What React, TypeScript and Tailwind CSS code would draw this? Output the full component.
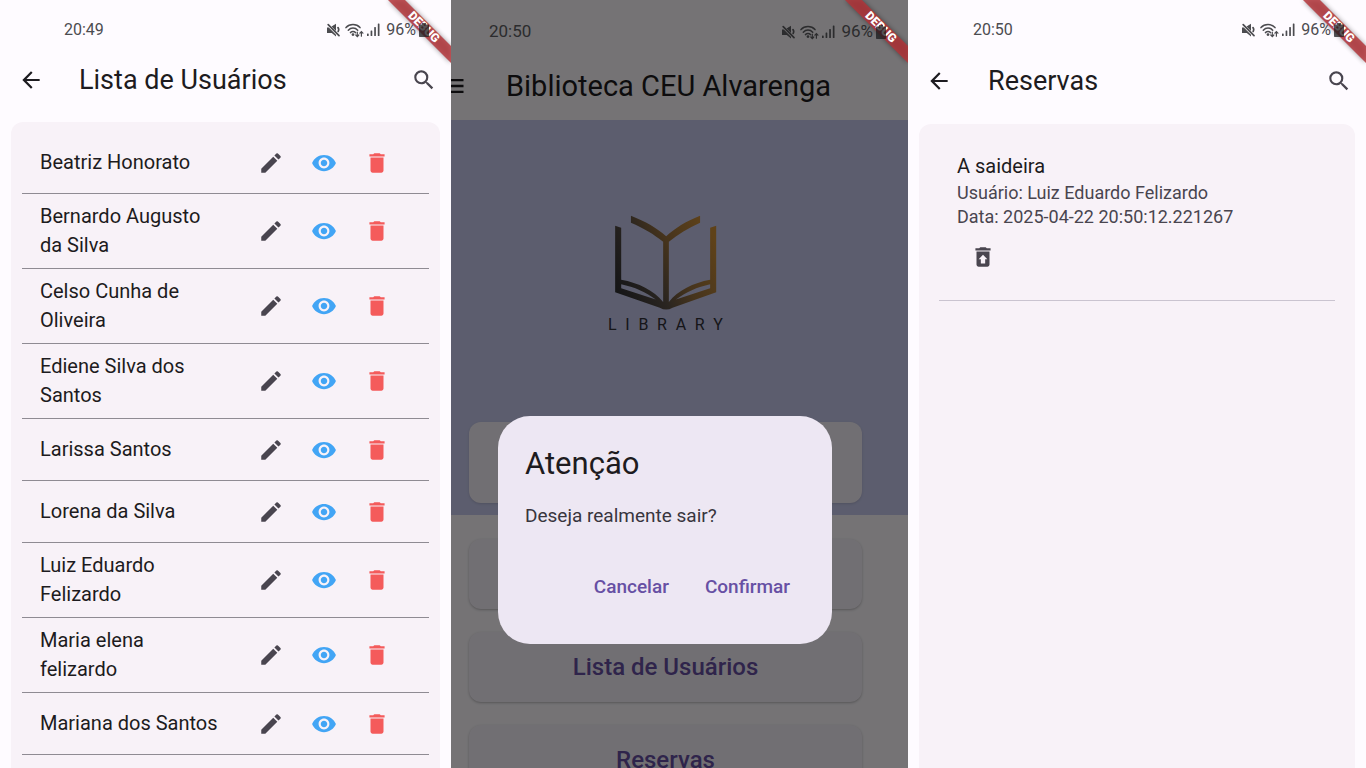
import React from "react";
import {
  MdArrowBack,
  MdDelete,
  MdEdit,
  MdMenu,
  MdRestoreFromTrash,
  MdSearch,
  MdVisibility,
} from "react-icons/md";

const users = [
  "Beatriz Honorato",
  "Bernardo Augusto\nda Silva",
  "Celso Cunha de\nOliveira",
  "Ediene Silva dos\nSantos",
  "Larissa Santos",
  "Lorena da Silva",
  "Luiz Eduardo\nFelizardo",
  "Maria elena\nfelizardo",
  "Mariana dos Santos",
];

function MuteIcon() {
  return (
    <svg width="13" height="14" viewBox="0 0 13 14" fill="currentColor">
      <path d="M0 4.600H1.800L9 11.800V13.400L4.800 10H0zM9 .8V8L4.600 3.600z" />
      <path
        d="M1.200 1.600L12 12.600M11 4.600c.8 1 .9 2.400.2 3.800"
        fill="none"
        stroke="currentColor"
        strokeWidth="1.700"
        strokeLinecap="round"
      />
    </svg>
  );
}

function WifiIcon() {
  return (
    <svg
      width="19"
      height="15"
      viewBox="0 0 19 15"
      fill="none"
      stroke="currentColor"
      strokeWidth="1.5"
      strokeLinecap="round"
    >
      <path d="M1 4.6C4.6 .6 11.4 .6 15 4.6M3.3 7.2c2.6-2.9 6.8-2.9 9.4 0M5.5 9.6c1.5-1.6 3.5-1.6 5 0" />
      <circle cx="8" cy="11.6" r=".7" fill="currentColor" />
      <path
        d="M12.3 9v4.4M10.8 12l1.5 1.6 1.5-1.6M16.4 13.2V8.8M14.9 10.2l1.5-1.6 1.5 1.6"
        strokeWidth="1.2"
      />
    </svg>
  );
}

function SignalIcon() {
  return (
    <svg width="13" height="14" viewBox="0 0 13 14" fill="currentColor">
      <rect x="0" y="10.5" width="1.7" height="2.5" rx=".6" />
      <rect x="3.6" y="7.5" width="1.7" height="5.5" rx=".6" />
      <rect x="7.2" y="4" width="1.7" height="9" rx=".6" />
      <rect x="10.8" y="0.5" width="1.7" height="12.5" rx=".6" />
    </svg>
  );
}

// The system bar stays above the app's banner
function BatteryIcon() {
  return (
    <svg
      className="relative z-30 opacity-75"
      width="10"
      height="14"
      viewBox="0 0 10 14"
      fill="#1c1c1e"
    >
      <path d="M3 0h4v1.4h2c.6 0 1 .4 1 1V13c0 .6-.4 1-1 1H1c-.6 0-1-.4-1-1V2.4c0-.6.4-1 1-1h2z" />
    </svg>
  );
}

function StatusBar({ time, className }: { time: string; className: string }) {
  return (
    <div className={`flex items-center justify-between ${className}`}>
      <span>{time}</span>
      <div className="flex items-center gap-[3px]">
        <MuteIcon />
        <span className="pl-[2px]">
          <WifiIcon />
        </span>
        <SignalIcon />
        <span className="pl-[3px]">96%</span>
        <BatteryIcon />
      </div>
    </div>
  );
}

// Corner banner, sits above everything in its screen
function DebugBanner() {
  return (
    <svg
      className="pointer-events-none absolute top-0 right-0 z-20"
      width="72"
      height="72"
      viewBox="0 0 72 72"
    >
      <defs>
        <filter id="bannerShadow" x="-30%" y="-30%" width="160%" height="160%">
          <feGaussianBlur stdDeviation="2.5" />
        </filter>
      </defs>
      <path
        d="M9 0H26L72 46V63z"
        fill="#000"
        opacity=".4"
        filter="url(#bannerShadow)"
      />
      <path d="M9 0H26L72 46V63z" fill="#b53338" opacity=".82" />
      <text
        x="45"
        y="31"
        transform="rotate(45 45 27)"
        textAnchor="middle"
        fill="#fff"
        className="font-['Roboto',sans-serif] text-[12px] font-black"
      >
        DEBUG
      </text>
    </svg>
  );
}

function UsersScreen() {
  return (
    <section className="relative flex min-w-0 flex-col overflow-hidden bg-[#fefbff]">
      <StatusBar
        time="20:49"
        className="h-[60px] pr-[22px] pl-16 text-[16px] text-[#4c4c50]"
      />
      <header className="flex h-10 items-center pr-[14px] pl-[18px]">
        <button aria-label="Voltar">
          <MdArrowBack size={26} />
        </button>
        <h1 className="grow pl-[35px] text-[27px]">Lista de Usuários</h1>
        <button aria-label="Buscar" className="text-[#49454f]">
          <MdSearch size={26} />
        </button>
      </header>
      <ul className="mx-[11px] mt-[22px] grow rounded-t-xl bg-[#f8f2f8] px-[11px] pt-[10px]">
        {users.map((user) => (
          <li
            key={user}
            className="flex min-h-[62px] items-center border-b border-[#8f8b93] py-2 pr-[26px] pl-[18px]"
          >
            <p className="grow text-[20px] leading-[29px] whitespace-pre-line">
              {user}
            </p>
            <div className="flex">
              <button
                aria-label="Editar"
                className="flex w-[53px] justify-center text-[#49454f]"
              >
                <MdEdit size={26} />
              </button>
              <button
                aria-label="Visualizar"
                className="flex w-[53px] justify-center text-[#42a5f5]"
              >
                <MdVisibility size={26} />
              </button>
              <button
                aria-label="Excluir"
                className="flex w-[53px] justify-center text-[#f45b5b]"
              >
                <MdDelete size={26} />
              </button>
            </div>
          </li>
        ))}
      </ul>
      <DebugBanner />
    </section>
  );
}

function LibraryLogo() {
  return (
    <div className="flex w-[115px] flex-col items-center gap-[6px]">
      <svg width="103" height="95" viewBox="72 45 306 283">
        <defs>
          <linearGradient id="gold" x1="0" y1=".75" x2="1" y2=".3">
            <stop offset="0" stopColor="#303034" />
            <stop offset=".35" stopColor="#5c5148" />
            <stop offset=".6" stopColor="#98713f" />
            <stop offset="1" stopColor="#cf9038" />
          </linearGradient>
        </defs>
        <path
          fill="url(#gold)"
          fillRule="evenodd"
          d="M75 77l18 6V238C145 247 190 270 218 304V125C190 102 160 84 122 68V47C165 64 200 84 227 108C254 84 285 64 328 47V68C292 84 262 102 235 125V304C262 270 308 247 358 238V83l18-6V275L246 321Q227 332 208 321L75 275zM93 251V263L196 297C168 275 132 259 93 251zM358 251C320 259 285 275 256 297L358 263z"
        />
      </svg>
      <div
        aria-label="LIBRARY"
        className="flex w-full justify-between text-[16px] leading-[17px] text-[#303038]"
      >
        {"LIBRARY".split("").map((letter, i) => (
          <span key={i}>{letter}</span>
        ))}
      </div>
    </div>
  );
}

function ExitDialog() {
  return (
    <div className="absolute inset-0 z-10 bg-black/54 pt-[416px] pr-[76px] pl-[47px]">
      <div
        role="dialog"
        aria-labelledby="exit-title"
        className="rounded-[32px] bg-[#ede7f3] px-[27px] pt-[27px] pb-8"
      >
        <h2 id="exit-title" className="text-[31px] leading-[42px]">
          Atenção
        </h2>
        <p className="pt-[17px] text-[19px] leading-[28px] text-[#38353d]">
          Deseja realmente sair?
        </p>
        <div className="flex justify-end gap-9 pt-8 pr-[15px] text-[19px] leading-[50px] font-medium text-[#6750a4]">
          <button className="h-[50px]">Cancelar</button>
          <button className="h-[50px]">Confirmar</button>
        </div>
      </div>
    </div>
  );
}

function HomeScreen() {
  return (
    <section className="relative flex min-w-0 flex-col overflow-hidden bg-[#fefbff]">
      <StatusBar
        time="20:50"
        className="h-16 shrink-0 pr-[22px] pl-[38px] text-[17px] text-[#606064]"
      />
      <header className="flex h-14 shrink-0 items-start">
        <button aria-label="Menu" className="-ml-3 pt-2">
          <MdMenu size={28} />
        </button>
        <h1 className="pl-[39px] text-[29px] leading-[44px] whitespace-nowrap">
          Biblioteca CEU Alvarenga
        </h1>
      </header>
      <div className="flex h-[395px] shrink-0 flex-col items-center justify-between bg-[#c8cbef] pt-[95px] pr-[46px] pb-3 pl-[18px]">
        <LibraryLogo />
        <div className="h-[81px] w-full rounded-xl bg-[#f7f2fa] shadow-sm" />
      </div>
      <div className="flex flex-col gap-[23px] pt-6 pr-[46px] pl-[18px] text-[24px] font-medium text-[#6750a4]">
        <button
          aria-label="Lista de Livros"
          className="h-[70px] shrink-0 rounded-xl bg-[#f7f2fa] shadow-sm shadow-black/20"
        />
        <button className="h-[70px] shrink-0 rounded-xl bg-[#f7f2fa] shadow-sm shadow-black/20">
          Lista de Usuários
        </button>
        <button className="h-[70px] shrink-0 rounded-xl bg-[#f7f2fa] shadow-sm shadow-black/20">
          Reservas
        </button>
      </div>
      <ExitDialog />
      <DebugBanner />
    </section>
  );
}

function ReservationsScreen() {
  return (
    <section className="relative flex min-w-0 flex-col overflow-hidden bg-[#fefbff]">
      <StatusBar
        time="20:50"
        className="h-[60px] pr-[22px] pl-[65px] text-[16px] text-[#4c4c50]"
      />
      <header className="flex h-[42px] items-center pr-[14px] pl-[18px]">
        <button aria-label="Voltar">
          <MdArrowBack size={26} />
        </button>
        <h1 className="grow pl-[36px] text-[27px]">Reservas</h1>
        <button aria-label="Buscar" className="text-[#49454f]">
          <MdSearch size={26} />
        </button>
      </header>
      <div className="mx-[11px] mt-[22px] grow rounded-t-xl bg-[#f8f2f8] px-5 pt-7">
        <article className="border-b border-[#cac4d0] px-[18px] pb-[30px]">
          <h2 className="text-[20px] leading-[29px]">A saideira</h2>
          <div className="text-[18px] leading-6 text-[#49454f]">
            <p>Usuário: Luiz Eduardo Felizardo</p>
            <p>Data: 2025-04-22 20:50:12.221267</p>
          </div>
          <button
            aria-label="Cancelar reserva"
            className="mt-[15px] ml-[13px] block text-[#49454f]"
          >
            <MdRestoreFromTrash size={26} />
          </button>
        </article>
      </div>
      <DebugBanner />
    </section>
  );
}

function App() {
  return (
    <main className="grid h-screen grid-cols-[451fr_457fr_458fr] overflow-hidden font-['Roboto',sans-serif] text-[#1d1b20]">
      <UsersScreen />
      <HomeScreen />
      <ReservationsScreen />
    </main>
  );
}

export default App;
